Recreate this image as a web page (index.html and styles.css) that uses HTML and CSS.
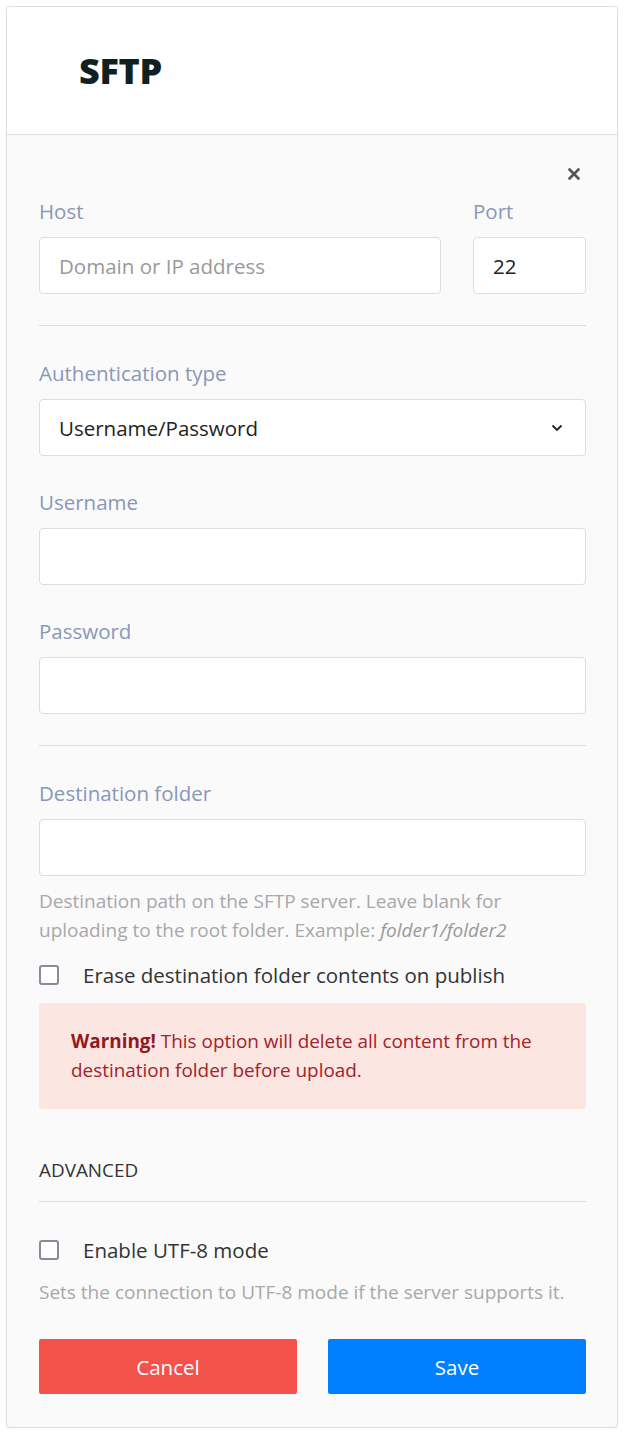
FILE: index.html
```html
<!DOCTYPE html>
<html>
<head>
<meta charset="utf-8">
<link rel="stylesheet" href="styles.css">
</head>
<body>
<div class="card">
  <header class="card-head">
    <h1 class="logo">SFTP</h1>
  </header>
  <div class="card-body">
    <div class="close-row">
      <svg class="close" width="12" height="12" viewBox="0 0 12 12"><path d="M1.5 1.5 L10.5 10.5 M10.5 1.5 L1.5 10.5" stroke="#555" stroke-width="2.6" stroke-linecap="round"/></svg>
    </div>
    <div class="row">
      <div class="field grow">
        <label class="label">Host</label>
        <div class="input placeholder">Domain or IP address</div>
      </div>
      <div class="field port">
        <label class="label">Port</label>
        <div class="input">22</div>
      </div>
    </div>
    <hr class="divider d1">
    <div class="field">
      <label class="label">Authentication type</label>
      <div class="input select">
        <span>Username/Password</span>
        <svg width="12" height="8" viewBox="0 0 12 8"><path d="M1.5 1.5 L6 6 L10.5 1.5" fill="none" stroke="#222" stroke-width="1.8"/></svg>
      </div>
    </div>
    <div class="field gap">
      <label class="label">Username</label>
      <div class="input"></div>
    </div>
    <div class="field gap">
      <label class="label">Password</label>
      <div class="input"></div>
    </div>
    <hr class="divider d1">
    <div class="field">
      <label class="label">Destination folder</label>
      <div class="input"></div>
    </div>
    <p class="help">Destination path on the SFTP server. Leave blank for uploading to the root folder. Example: <em>folder1/folder2</em></p>
    <div class="check">
      <span class="box"></span>
      <span>Erase destination folder contents on publish</span>
    </div>
    <div class="warning"><strong>Warning!</strong> This option will delete all content from the destination folder before upload.</div>
    <div class="section-title">ADVANCED</div>
    <hr class="divider d2">
    <div class="check utf">
      <span class="box"></span>
      <span>Enable UTF-8 mode</span>
    </div>
    <p class="help help2">Sets the connection to UTF-8 mode if the server supports it.</p>
    <div class="buttons">
      <button class="btn cancel">Cancel</button>
      <button class="btn save">Save</button>
    </div>
  </div>
</div>
</body>
</html>
```
FILE: styles.css
```css
* { box-sizing: border-box; }
body {
  margin: 0;
  padding: 6px 6px 0 6px;
  background: #fff;
  font-family: "Open Sans", "Noto Sans", sans-serif;
  color: #333;
}
.card {
  width: 612px;
  height: 1422px;
  border: 1px solid #ddd;
  border-radius: 4px;
  background: #fafafa;
  box-shadow: 0 1px 2px rgba(0,0,0,0.06);
  overflow: hidden;
}
.card-head {
  height: 128px;
  background: #fff;
  border-bottom: 1px solid #ddd;
  display: flex;
  align-items: center;
  padding-left: 72px;
}
.logo {
  margin: 0;
  font-size: 36px;
  font-weight: 800;
  color: #0f1f22;
  letter-spacing: -0.3px;
  line-height: 1;
  padding-top: 1px;
}
.card-body {
  padding: 0 31px 0 32px;
}
.close-row {
  display: flex;
  justify-content: flex-end;
  padding-top: 33px;
  padding-right: 6px;
  height: 64px;
}
.row {
  display: flex;
  gap: 32px;
}
.grow { flex: 1; }
.port { width: 113px; }
.field { display: flex; flex-direction: column; }
.field.gap { margin-top: 34px; }
.label {
  font-size: 20.5px;
  line-height: 24px;
  color: #8997b8;
  margin-bottom: 14px;
}
.input {
  height: 57px;
  background: #fff;
  border: 1px solid #ddd;
  border-radius: 4px;
  padding: 0 19px;
  display: flex;
  align-items: center;
  font-size: 20.5px;
  color: #222;
}
.placeholder { color: #999; }
.select { justify-content: space-between; padding-right: 22px; }
.divider {
  border: 0;
  border-top: 1px solid #ddd;
  margin: 31px 0 35px;
}
.help {
  margin: 11px 0 0;
  font-size: 19px;
  line-height: 29px;
  color: #a8a8a8;
}
.help em { color: #999; }
.check {
  display: flex;
  align-items: center;
  gap: 24px;
  font-size: 20.5px;
  color: #333;
  margin-top: 15px;
  height: 30px;
}
.box {
  width: 20px;
  height: 20px;
  border: 2px solid #8a8a99;
  border-radius: 3px;
  background: #fff;
  flex: none;
}
.warning {
  margin-top: 13px;
  background: #fbe6e2;
  border-radius: 4px;
  padding: 24px 32px;
  font-size: 18.9px;
  line-height: 29px;
  color: #a3222b;
}
.warning strong { font-weight: 700; color: #95181f; }
.section-title {
  margin-top: 48px;
  font-size: 18.9px;
  line-height: 26px;
  color: #333;
}
.divider.d2 { margin: 18px 0 33px; }
.utf { margin-top: 0; }
.help2 { margin-top: 13px; }
.buttons {
  display: flex;
  gap: 31px;
  margin-top: 32px;
}
.btn {
  flex: 1;
  height: 55px;
  border: 0;
  border-radius: 2px;
  color: #fff;
  font-family: "Open Sans", "Noto Sans", sans-serif;
  font-size: 20.5px;
}
.cancel { background: #f4524b; }
.save { background: #0080ff; }
```
